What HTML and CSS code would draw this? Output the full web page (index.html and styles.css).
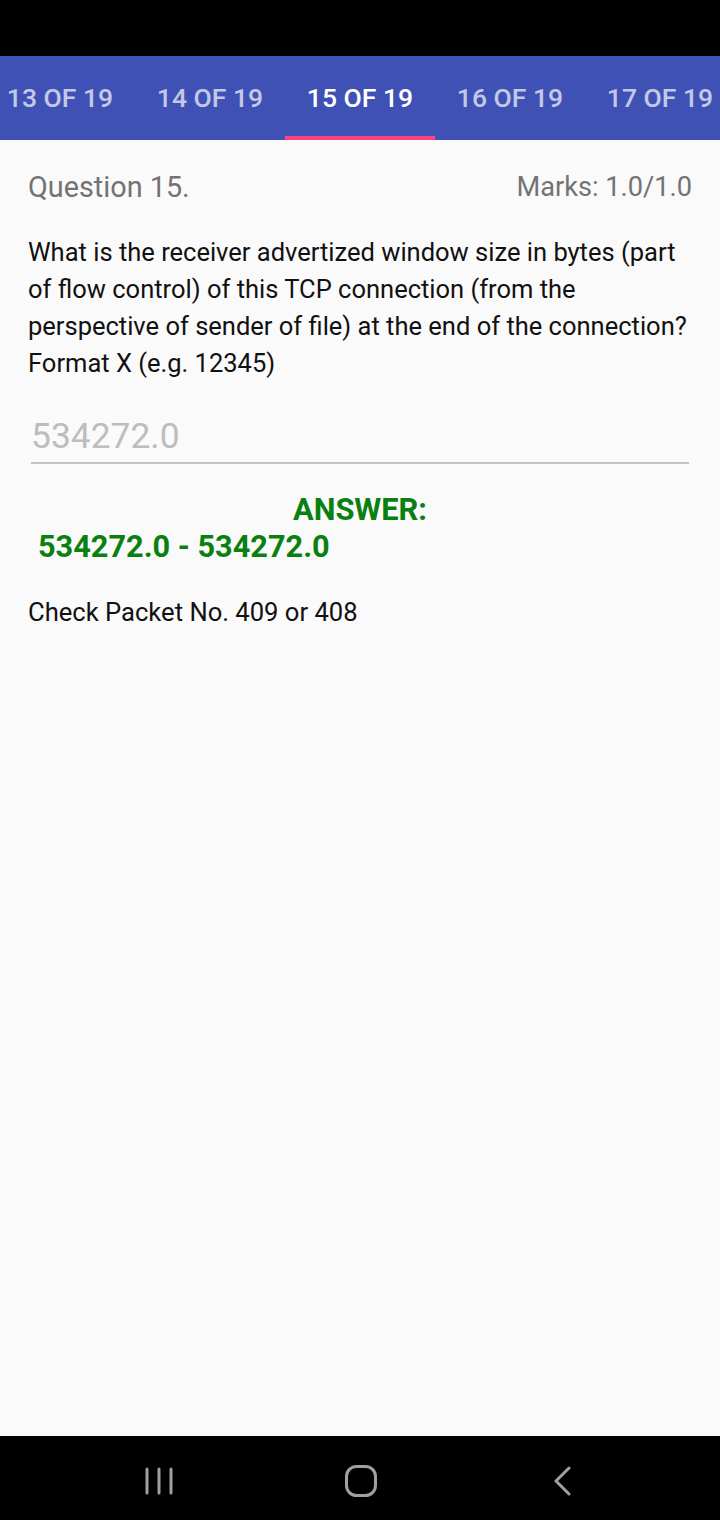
FILE: index.html
```html
<!DOCTYPE html>
<html>
<head>
<meta charset="utf-8">
<link rel="stylesheet" href="styles.css">
</head>
<body>
<div class="screen">
  <div class="status-bar"></div>
  <div class="tab-bar">
    <div class="tab-track">
      <div class="tab">13 OF 19</div>
      <div class="tab">14 OF 19</div>
      <div class="tab active">15 OF 19</div>
      <div class="tab">16 OF 19</div>
      <div class="tab">17 OF 19</div>
    </div>
  </div>
  <main class="content">
    <div class="q-header">
      <span class="q-title">Question 15.</span>
      <span class="q-marks">Marks: 1.0/1.0</span>
    </div>
    <p class="q-text">What is the receiver advertized window size in bytes (part of flow control) of this TCP connection (from the perspective of sender of file) at the end of the connection? Format X (e.g. 12345)</p>
    <div class="answer-input">534272.0</div>
    <div class="answer-label">ANSWER:</div>
    <div class="answer-value">534272.0 - 534272.0</div>
    <p class="hint">Check Packet No. 409 or 408</p>
  </main>
  <nav class="nav-bar">
    <svg class="nav-icon" width="30" height="30" viewBox="0 0 30 30">
      <g stroke="#a0a0a0" stroke-width="3" stroke-linecap="round">
        <line x1="2" y1="3" x2="2" y2="27"/>
        <line x1="14" y1="3" x2="14" y2="27"/>
        <line x1="26" y1="3" x2="26" y2="27"/>
      </g>
    </svg>
    <svg class="nav-icon" width="32" height="32" viewBox="0 0 32 32">
      <rect x="1.5" y="1.5" width="29" height="29" rx="10" fill="none" stroke="#a0a0a0" stroke-width="3"/>
    </svg>
    <svg class="nav-icon" width="20" height="30" viewBox="0 0 20 30">
      <polyline points="16,2 3,15 16,28" fill="none" stroke="#a0a0a0" stroke-width="3" stroke-linecap="round" stroke-linejoin="round"/>
    </svg>
  </nav>
</div>
</body>
</html>
```
FILE: styles.css
```css
* { box-sizing: border-box; }
html, body { margin: 0; padding: 0; }
body {
  width: 720px;
  height: 1520px;
  font-family: Roboto, "Noto Sans", sans-serif;
  background: #fafafa;
  overflow: hidden;
}
.screen {
  display: flex;
  flex-direction: column;
  height: 1520px;
}
.status-bar {
  height: 56px;
  background: #000;
  flex: none;
}
.tab-bar {
  height: 84px;
  background: #3f51b5;
  overflow: hidden;
  flex: none;
}
.tab-track {
  display: flex;
  margin-left: -15px;
  height: 100%;
}
.tab {
  flex: none;
  width: 150px;
  height: 100%;
  display: flex;
  align-items: center;
  justify-content: center;
  font-size: 26.5px;
  font-weight: 500;
  color: rgba(255,255,255,0.7);
  border-bottom: 4px solid transparent;
  padding-top: 2px;
}
.tab.active {
  color: #fff;
  border-bottom-color: #ff4081;
}
.content {
  flex: 1;
  padding: 0 28px;
}
.q-header {
  display: flex;
  justify-content: space-between;
  align-items: center;
  margin-top: 30px;
  height: 34px;
  font-size: 28.8px;
  color: #737373;
}
.q-marks { font-size: 27.2px; }
.q-text {
  margin: 30px 0 0;
  font-size: 25.5px;
  line-height: 37px;
  color: #111;
}
.answer-input {
  margin: 33px 3px 0 3px;
  height: 49px;
  font-size: 35.4px;
  color: #bdbdbd;
  border-bottom: 2px solid #c4c4c4;
  line-height: 42px;
  padding-left: 0;
}
.answer-label {
  margin-top: 27px;
  text-align: center;
  font-size: 30.8px;
  font-weight: 700;
  color: #0a8010;
  line-height: 37px;
}
.answer-value {
  padding-left: 10px;
  font-size: 30.7px;
  font-weight: 700;
  color: #0a8010;
  line-height: 37px;
}
.hint {
  margin: 31px 0 0;
  font-size: 25.6px;
  line-height: 32px;
  color: #111;
}
.nav-bar {
  flex: none;
  height: 84px;
  background: #000;
  display: flex;
  align-items: center;
  padding-top: 6px;
}
.nav-icon:nth-child(1) { margin-left: 145px; }
.nav-icon:nth-child(2) { margin-left: 170px; }
.nav-icon:nth-child(3) { margin-left: 176px; }
```
